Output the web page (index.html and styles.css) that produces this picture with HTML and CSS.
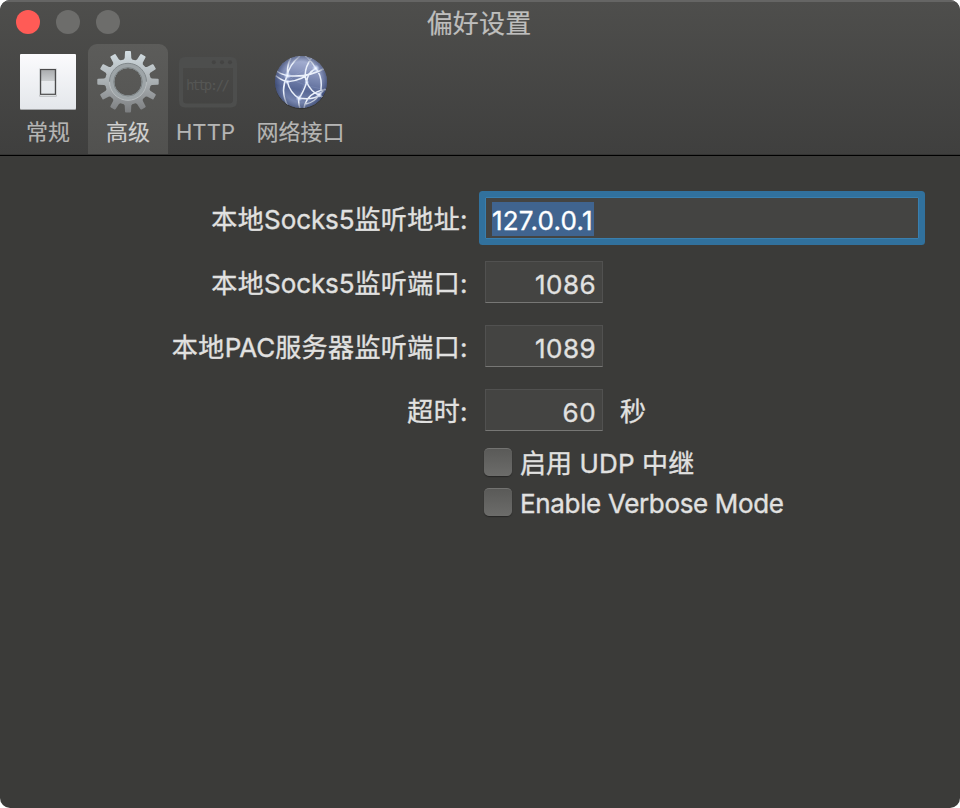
FILE: index.html
```html
<!DOCTYPE html>
<html lang="zh-CN">
<head>
<meta charset="utf-8">
<title>偏好设置</title>
<link rel="stylesheet" href="styles.css">
</head>
<body>
<main class="window">
  <header class="chrome">
    <div class="titlebar">
      <div class="lights"><span class="light close"></span><span class="light"></span><span class="light"></span></div>
      <h1 class="title">偏好设置</h1>
    </div>
    <nav class="toolbar">
      <div class="tool general">
        <svg class="icon" viewBox="0 0 64 64">
          <defs>
            <linearGradient id="plate" x2="0" y2="1"><stop stop-color="#fbfbfd"/><stop offset="1" stop-color="#e4e7eb"/></linearGradient>
            <linearGradient id="rocker" x2="0" y2="1"><stop stop-color="#a9abad"/><stop offset=".47" stop-color="#cccfd1"/><stop offset=".48" stop-color="#e9ebee"/><stop offset="1" stop-color="#e4e8ec"/></linearGradient>
          </defs>
          <rect x="4" y="5" width="56" height="55" rx="1" fill="#a5a7a9"/>
          <rect x="4" y="4" width="56" height="55" rx="1" fill="url(#plate)"/>
          <rect x="23" y="18" width="18" height="29" rx="1.5" fill="#c3c6c9"/>
          <rect x="23.7" y="17.7" width="16.6" height="27.8" rx="1" fill="#f6f7f8"/>
          <rect x="24.6" y="19.5" width="14.8" height="24.8" fill="url(#rocker)" stroke="#4b4b4c" stroke-width="1.2"/>
        </svg>
        <span class="caption">常规</span>
      </div>
      <div class="tool advanced">
        <svg class="icon" viewBox="0 0 64 64">
          <defs>
            <linearGradient id="metal" x1="0" y1="1" x2="0" y2="62" gradientUnits="userSpaceOnUse"><stop stop-color="#d3dee3"/><stop offset=".5" stop-color="#aab0b3"/><stop offset="1" stop-color="#7c7e80"/></linearGradient>
            <path id="tooth" d="M26.7 11 28.7 8 29 2Q29 1.1 30 1.1H34Q35 1.1 35 2L35.3 8 37.3 11Z"/>
            <clipPath id="gear">
              <path d="M32 9a22.8 22.8 0 1 0 .01 0Z"/>
              <use href="#tooth"/><use href="#tooth" transform="rotate(30 32 31.8)"/><use href="#tooth" transform="rotate(60 32 31.8)"/><use href="#tooth" transform="rotate(90 32 31.8)"/><use href="#tooth" transform="rotate(120 32 31.8)"/><use href="#tooth" transform="rotate(150 32 31.8)"/><use href="#tooth" transform="rotate(180 32 31.8)"/><use href="#tooth" transform="rotate(210 32 31.8)"/><use href="#tooth" transform="rotate(240 32 31.8)"/><use href="#tooth" transform="rotate(270 32 31.8)"/><use href="#tooth" transform="rotate(300 32 31.8)"/><use href="#tooth" transform="rotate(330 32 31.8)"/>
            </clipPath>
          </defs>
          <path clip-path="url(#gear)" fill="url(#metal)" fill-rule="evenodd" d="M0 0H64V64H0ZM32 18a13.8 13.8 0 1 1-.01 0Z"/>
          <circle cx="32" cy="31.8" r="16" fill="none" stroke="#9da4a7" stroke-width="4.500"/>
          <path d="M13.500 31.800A18.500 18.500 0 0 1 50.500 31.800" fill="none" stroke="#81888b" stroke-width="1"/>
          <path d="M13.500 31.800A18.500 18.500 0 0 0 50.500 31.800" fill="none" stroke="#b8bdbf" stroke-width="1"/>
          <circle cx="32" cy="31.8" r="14.200" fill="none" stroke="#7c8385" stroke-width="1"/>
        </svg>
        <span class="caption">高级</span>
      </div>
      <div class="tool http">
        <svg class="icon" viewBox="0 0 64 64">
          <path fill="#4d4e4d" fill-rule="evenodd" d="M9 7H55Q61 7 61 13V51Q61 57.500 55 57.500H9Q3 57.500 3 51V13Q3 7 9 7ZM7 18V50Q7 53.500 11 53.500H53Q57 53.500 57 50V18Z"/>
          <g fill="#444443"><circle cx="37.800" cy="12.300" r="2"/><circle cx="46" cy="12.300" r="2"/><circle cx="54" cy="12.300" r="2"/></g>
          <text x="10" y="40" class="url" textLength="44" lengthAdjust="spacing">http://</text>
        </svg>
        <span class="caption latin">HTTP</span>
      </div>
      <div class="tool network">
        <svg class="icon" viewBox="0 0 64 64">
          <defs>
            <linearGradient id="sphere" x1=".6" y1="0" x2=".4" y2="1"><stop stop-color="#b1bbdb"/><stop offset=".3" stop-color="#8a96bd"/><stop offset=".65" stop-color="#586896"/><stop offset="1" stop-color="#8796bd"/></linearGradient>
            <radialGradient id="rim"><stop offset=".78" stop-color="#29365d" stop-opacity="0"/><stop offset="1" stop-color="#29365d" stop-opacity=".55"/></radialGradient>
            <radialGradient id="glow"><stop stop-color="#fff"/><stop offset=".3" stop-color="#e4edff" stop-opacity=".8"/><stop offset="1" stop-color="#b7c9f5" stop-opacity="0"/></radialGradient>
            <clipPath id="ball"><circle cx="32" cy="32" r="26"/></clipPath>
          </defs>
          <circle cx="32" cy="33.200" r="26" fill="#292929" opacity=".6"/>
          <circle cx="32" cy="32" r="26" fill="url(#sphere)"/>
          <g clip-path="url(#ball)" fill="none">
            <path stroke="#a9b7dc" stroke-width=".6" opacity=".35" d="M18 26Q30 35 53 39M17 33Q36 14 53 18M30 48Q35 30 47 18"/>
            <path stroke="#eaf0fa" stroke-width="1.500" d="M18.300 25.700Q20 15 31 6M18.300 25.700Q18 14 22 8M18.300 25.700Q10 42 20 58M6 20Q11 24 18.300 25.700Q40 28 58 17M5 24Q11 30 18.300 31.700Q34 31 46.700 18.300M18.300 31.700Q21 43 30 48.300Q34 43 37.700 32.300M30 48.300Q29 53 31 58M30 48.300Q46 50 50 45M46.700 18.300Q42 10 36 6M46.700 18.300Q55 28 51 45M43 7Q33 21 37.700 32.300Q42 42 50 45L55 48M37.700 32.300Q38 23 46.700 18.300M35 58Q38 42 57 39.500M37 54Q46 52 50 45L56 39"/>
          </g>
          <circle cx="32" cy="32" r="26" fill="url(#rim)"/>
          <g fill="url(#glow)"><circle cx="18.300" cy="25.700" r="4"/><circle cx="18.300" cy="31.700" r="3"/><circle cx="46.700" cy="18.300" r="4"/><circle cx="30" cy="48.300" r="3.500"/><circle cx="37.700" cy="32.300" r="2.500"/><circle cx="50" cy="44.500" r="3.500"/></g>
        </svg>
        <span class="caption">网络接口</span>
      </div>
    </nav>
  </header>
  <form class="form">
    <label class="label" for="addr">本地<span class="latin-run">Socks5</span>监听地址:</label>
    <div class="field focused" id="addr"><span class="selection">127.0.0.1</span></div>
    <label class="label" for="port">本地<span class="latin-run">Socks5</span>监听端口:</label>
    <div class="field number" id="port">1086</div>
    <label class="label" for="pac">本地<span class="latin-run">PAC</span>服务器监听端口:</label>
    <div class="field number" id="pac">1089</div>
    <label class="label" for="timeout">超时:</label>
    <div class="with-unit"><div class="field number" id="timeout">60</div><span class="unit">秒</span></div>
    <div class="checks">
      <div class="check"><span class="box"></span><span class="check-text udp">启用 UDP 中继</span></div>
      <div class="check"><span class="box"></span><span class="check-text verbose">Enable Verbose Mode</span></div>
    </div>
  </form>
</main>
</body>
</html>
```
FILE: styles.css
```css
* { box-sizing: border-box; }
body { margin: 0; background: #fff; font-family: Inter, "Noto Sans CJK SC", sans-serif; }
.window { width: 960px; height: 808px; overflow: hidden; border-radius: 10px; background: #3b3b39; color: #e1e1e0; -webkit-text-stroke: .35px currentColor; }
.chrome { height: 156px; background: linear-gradient(#4e4e4c, #3f3f3e); border-top: 2px solid #656564; border-bottom: 1px solid #000; box-shadow: inset 0 -1px #343433; }
.titlebar { display: grid; grid-template-columns: 120px 1fr 120px; height: 42px; align-items: center; }
.lights { display: flex; gap: 16px; padding-left: 16px; padding-bottom: 2px; }
.light { width: 24px; height: 24px; border-radius: 50%; background: #6d6d6b; flex: none; }
.close { background: #ff5b56; }
.title { margin: 0; padding: 2px 2px 0 0; text-align: center; font-size: 26px; line-height: 38px; font-weight: 400; color: #bebebd; letter-spacing: .15px; -webkit-text-stroke-width: .2px; }
.toolbar { display: flex; padding-left: 8px; height: 110px; -webkit-text-stroke-width: .15px; }
.tool { width: 80px; display: flex; flex-direction: column; align-items: center; padding-top: 6px; }
.tool.advanced { background: linear-gradient(#5c5c5a, #51514f); border-radius: 9px 9px 0 0; }
.tool.network { width: 105px; }
.icon { width: 64px; height: 64px; flex: none; }
.caption { font-size: 22px; line-height: 32px; margin-top: 2px; color: #b5b5b4; white-space: nowrap; }
.advanced .caption { color: #d0d0cf; }
.latin { letter-spacing: .1px; margin-left: -5px; }
.url { font: 14px "DejaVu Sans Mono", monospace; fill: #555654; -webkit-text-stroke: 0; }
.form { display: grid; grid-template-columns: 468px 1fr; column-gap: 17px; grid-template-rows: 64px 64px 64px 64px auto; padding-top: 30px; font-size: 26px; align-items: center; }
.label { text-align: right; white-space: nowrap; line-height: 40px; padding-top: 3px; letter-spacing: .42px; }
.latin-run { letter-spacing: -.1px; }
.field { height: 42px; background: #444442; border: 1px solid #515150; border-bottom-color: #777775; line-height: 46px; }
.number { width: 118px; padding-right: 6px; text-align: right; letter-spacing: .45px; }
.focused { width: 434px; padding: 4px 0 0 6px; border-color: #397fae; box-shadow: 0 0 0 6px #31719d; border-radius: 1px; }
.selection { display: block; width: 102px; height: 34px; line-height: 37px; background: #40648f; color: #fff; letter-spacing: .2px; white-space: nowrap; }
.with-unit { display: flex; align-items: center; gap: 17px; }
.unit { line-height: 40px; padding-top: 3px; }
.checks { grid-column: 2; margin-left: -1px; }
.check { height: 40px; display: flex; align-items: center; gap: 8px; }
.box { width: 28px; height: 28px; border-radius: 5px; background: linear-gradient(#5a5a58, #6c6c6a); border-top: 1px solid #737371; box-shadow: 0 1px 1px #272726; }
.check-text { line-height: 40px; white-space: nowrap; padding-top: 3px; }
.udp { letter-spacing: .1px; }
.verbose { letter-spacing: -.34px; }
```
